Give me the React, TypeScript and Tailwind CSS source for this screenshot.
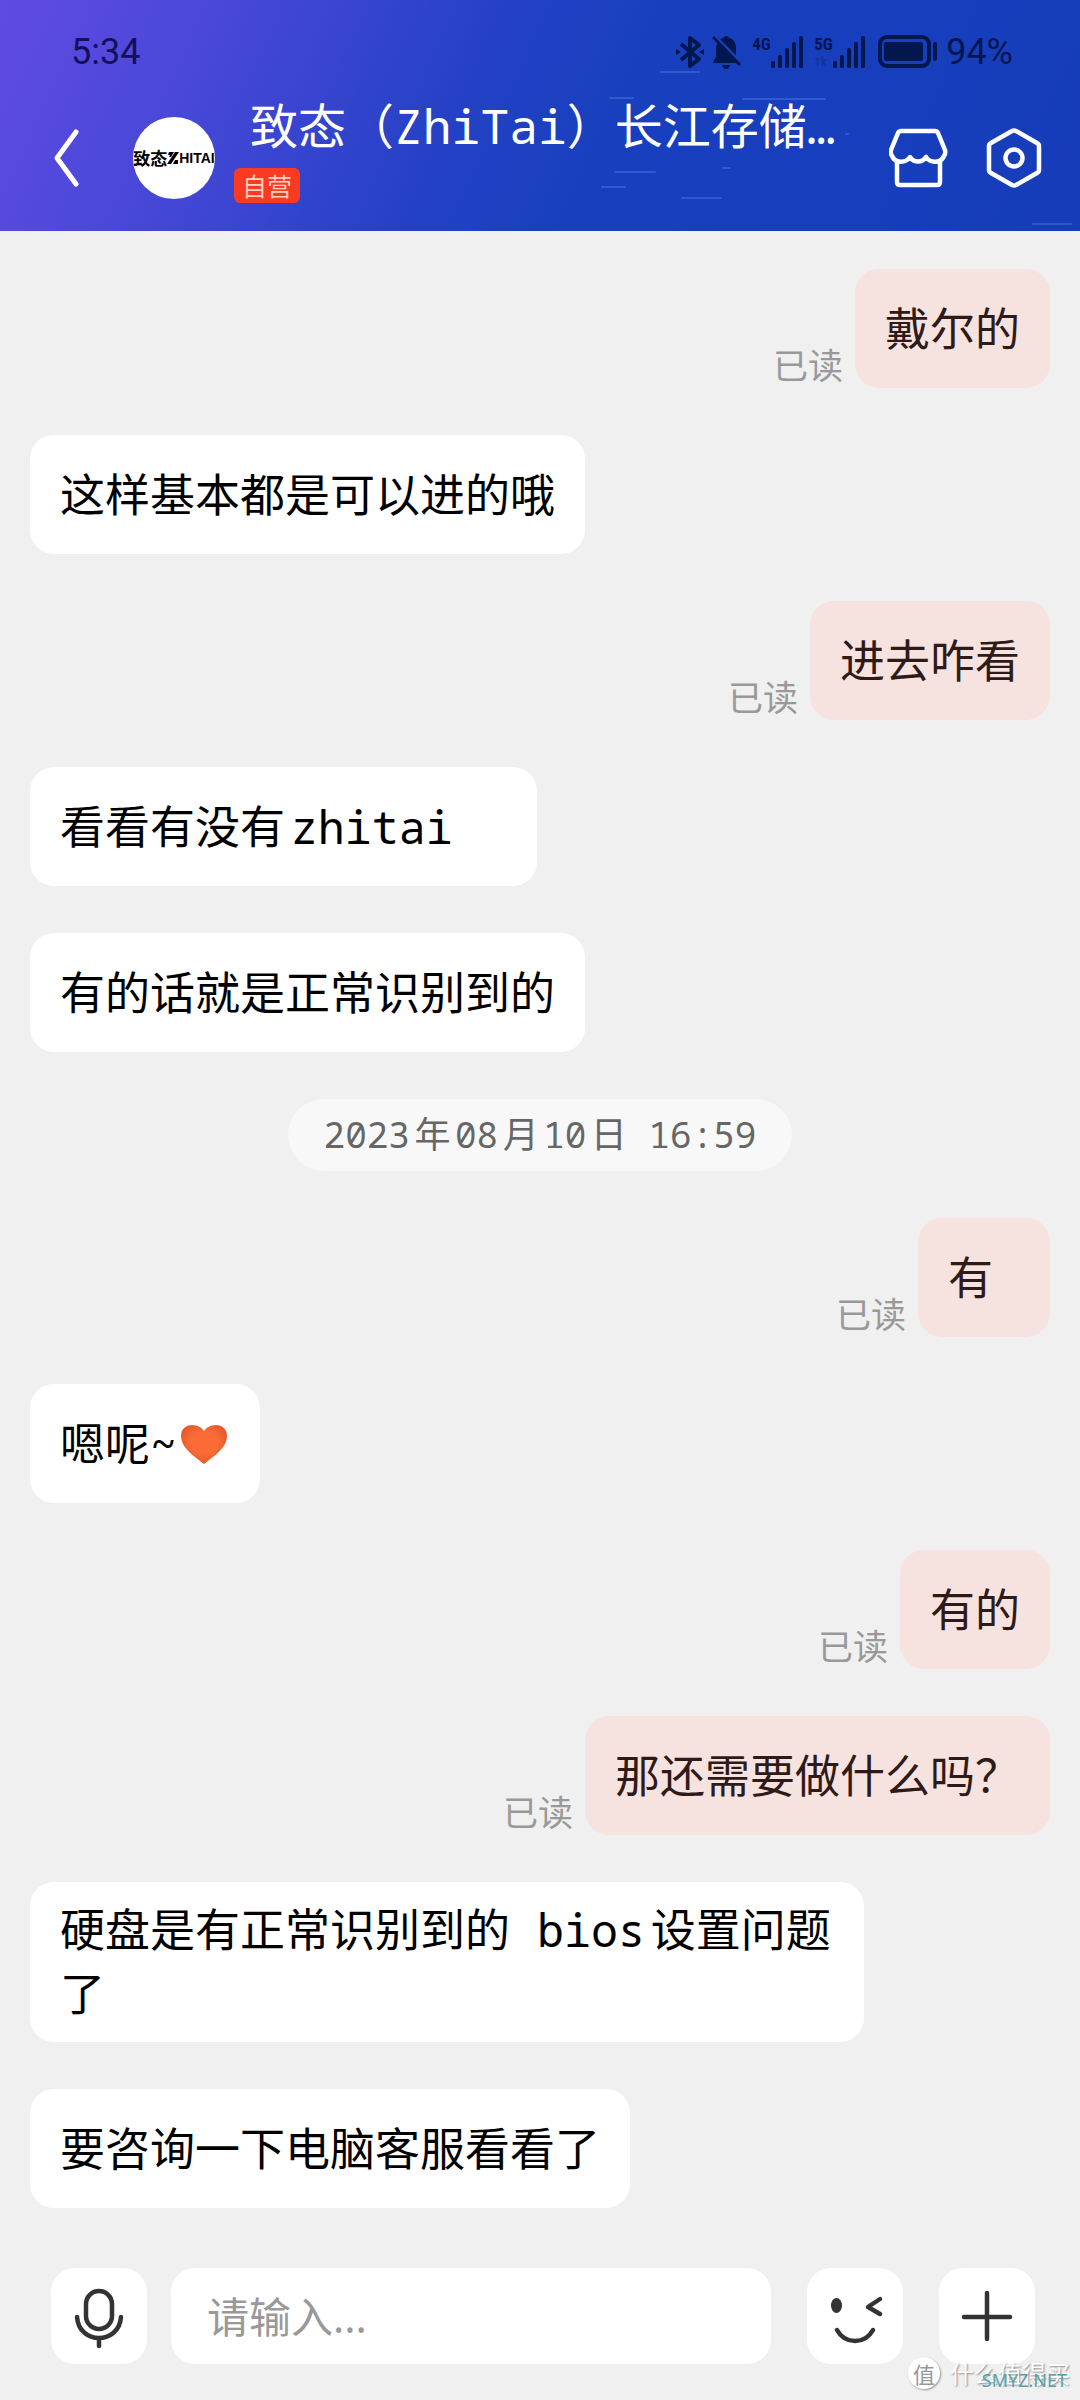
import type { ReactNode } from 'react'

type Message =
  | { kind: 'mine' | 'theirs'; text: string; heart?: boolean }
  | { kind: 'date'; text: string }

// Trailing no-break spaces are part of what was sent
const messages: Message[] = [
  { kind: 'mine', text: '戴尔的' },
  { kind: 'theirs', text: '这样基本都是可以进的哦' },
  { kind: 'mine', text: '进去咋看' },
  { kind: 'theirs', text: '看看有没有zhitai\u00a0\u00a0' },
  { kind: 'theirs', text: '有的话就是正常识别到的' },
  { kind: 'date', text: '2023年08月10日 16:59' },
  { kind: 'mine', text: '有\u00a0' },
  { kind: 'theirs', text: '嗯呢~', heart: true },
  { kind: 'mine', text: '有的' },
  { kind: 'mine', text: '那还需要做什么吗？' },
  { kind: 'theirs', text: '硬盘是有正常识别到的 bios设置问题了' },
  { kind: 'theirs', text: '要咨询一下电脑客服看看了' },
]

const streaks = [
  [660, 72, 40],
  [609, 98, 25],
  [742, 99, 84],
  [845, 134, 4],
  [722, 168, 9],
  [614, 172, 42],
  [601, 187, 25],
  [681, 198, 41],
  [1032, 224, 40],
]

function HeaderStreaks() {
  return (
    <svg
      className="absolute top-0 right-0 h-[231px] w-[1080px]"
      viewBox="0 0 1080 231"
      aria-hidden="true"
    >
      {streaks.map(([x, y, w]) => (
        <rect key={`${x}-${y}`} x={x} y={y - 1} width={w} height="2" rx="1" fill="#6f9bff" opacity="0.3" />
      ))}
    </svg>
  )
}

function BluetoothIcon() {
  return (
    <svg className="h-[34px] w-[28px]" viewBox="0 0 28 34" fill="none" stroke="currentColor" strokeWidth="4" strokeLinejoin="round">
      <path d="M5 9 L23 24 L14 31 V3 L23 10 L5 25" />
      <path d="M0 14 L5 17 L0 20 Z M28 14 L23 17 L28 20 Z" fill="currentColor" stroke="none" />
    </svg>
  )
}

function MutedBellIcon() {
  return (
    <svg className="h-[34px] w-[30px]" viewBox="0 0 30 34" fill="none">
      <path
        d="M7 6 C8 4 10 3 12 2.500 Q14 -1 16.500 2.500 C22 4 24 8 24 13 V20 L28 28 H1 Q1 26 4 22 V14 Q4 9 7 6 Z"
        fill="currentColor"
      />
      <path d="M10 30 H18 Q17 34 14 34 Q11 34 10 30 Z" fill="currentColor" />
      <path d="M1 0 L30 29" stroke="#1940bd" strokeWidth="4" />
      <path d="M1 2 L28 30" stroke="currentColor" strokeWidth="3" />
    </svg>
  )
}

function Signal({ label, speed }: { label: string; speed?: string }) {
  return (
    <div className="flex h-[34px]">
      <div className="flex w-[18px] flex-col justify-between font-['Roboto_Condensed','Liberation_Sans_Narrow','Roboto',sans-serif] text-[17px] leading-[18px] font-bold">
        <span>{label}</span>
        {speed && <span className="text-[13px] leading-[14px] opacity-25">{speed}</span>}
      </div>
      <svg className="h-[34px] w-[34px]" viewBox="0 0 34 34" fill="currentColor">
        <rect x="1" y="26" width="4" height="7" rx="1.500" />
        <rect x="8" y="20" width="4" height="13" rx="1.500" />
        <rect x="15" y="13" width="4" height="20" rx="1.500" />
        <rect x="22" y="7" width="4" height="26" rx="1.500" />
        <rect x="29" y="1" width="4" height="32" rx="1.500" />
      </svg>
    </div>
  )
}

function BatteryIcon() {
  return (
    <svg className="h-[34px] w-[60px]" viewBox="0 0 60 34" fill="none">
      <rect x="2" y="2" width="49" height="29" rx="7" stroke="currentColor" strokeWidth="4" />
      <rect x="6" y="7" width="39" height="19" rx="2" fill="currentColor" />
      <path d="M57 9 V24" stroke="currentColor" strokeWidth="4" strokeLinecap="round" />
    </svg>
  )
}

function StatusBar() {
  return (
    <div className="relative flex h-[34px] items-center justify-between pr-[67px] pl-[71px] font-['Roboto',sans-serif] text-[36px] leading-[34px] text-[#03174f]">
      <span className="text-[#130f5c]">5:34</span>
      <div className="flex items-center">
        <BluetoothIcon />
        <div className="ml-2 flex">
          <MutedBellIcon />
        </div>
        <div className="ml-2.5 flex gap-2.5">
          <Signal label="4G" />
          <Signal label="5G" speed="1k" />
        </div>
        <div className="mr-2 ml-3 flex">
          <BatteryIcon />
        </div>
        <span>94%</span>
      </div>
    </div>
  )
}

function Avatar() {
  return (
    <div className="flex size-[82px] shrink-0 items-center justify-center overflow-hidden rounded-full bg-white text-black">
      <span className="font-['Noto_Sans_CJK_SC',sans-serif] text-[17px] leading-[18px] font-bold whitespace-nowrap">致态</span>
      <svg className="h-[12px] w-[12px] shrink-0" viewBox="0 0 12 12" fill="currentColor" aria-label="Z">
        <path d="M2 0 H7 L4 5 H2 L3 3 H1 Z M8 0 H12 L4 12 H0 Z M8 8 H11 V12 H6 Z" />
      </svg>
      <span className="font-['Liberation_Sans',sans-serif] text-[14px] leading-[18px] font-bold">HITAI</span>
    </div>
  )
}

function Header() {
  return (
    <header className="relative bg-[linear-gradient(115deg,#604be2_0%,#4a48d8_18%,#2541c6_42%,#1840be_56%,#163cba_100%)] pt-[35px] pb-[27px]">
      <HeaderStreaks />
      <StatusBar />
      <div className="relative mt-[31px] flex h-[104px] items-center pr-[37px] pl-[49px] text-white">
        <button type="button" aria-label="返回" className="mt-3 shrink-0">
          <svg className="h-[60px] w-[34px]" viewBox="0 0 34 60" fill="none" stroke="currentColor" strokeWidth="5" strokeLinecap="round" strokeLinejoin="round">
            <path d="M27 4 L8 30 L27 56" />
          </svg>
        </button>
        <div className="mt-3 ml-[50px]">
          <Avatar />
        </div>
        <div className="ml-[19px] flex min-w-0 flex-1 flex-col items-start self-start">
          <h1 className="ml-4 text-[48px] leading-[52px] whitespace-nowrap">致态（ZhiTai）长江存储…</h1>
          <span className="mt-4 rounded-md bg-[#fb3a22] px-2 font-['Noto_Sans_CJK_SC',sans-serif] text-[25px] leading-[35px] text-[#ffd0c0]">
            自营
          </span>
        </div>
        <button type="button" aria-label="店铺" className="mt-3 shrink-0">
          <svg className="h-[62px] w-[60px]" viewBox="0 0 60 62" fill="none" stroke="currentColor" strokeWidth="4.500" strokeLinejoin="round">
            <path d="M12 4 H46 Q48 4 49 6 L56 23 Q57 26 55 29 C52 36 42 37 37 30 C33 36 25 36 21 30 C16 37 6 36 3 29 Q1 26 2 23 L9 6 Q10 4 12 4 Z" />
            <path d="M8 34 V55 Q8 58 11 58 H48 Q51 58 51 55 V34" />
          </svg>
        </button>
        <button type="button" aria-label="设置" className="mt-3 ml-[36px] shrink-0">
          <svg className="h-[62px] w-[58px]" viewBox="0 0 58 62" fill="none" stroke="currentColor" strokeWidth="4.500" strokeLinejoin="round">
            <path d="M27 4 Q29 3 31 4 L52 16 Q54 17 54 19 V43 Q54 45 52 46 L31 58 Q29 59 27 58 L6 46 Q4 45 4 43 V19 Q4 17 6 16 Z" />
            <circle cx="29" cy="31" r="8.500" />
          </svg>
        </button>
      </div>
    </header>
  )
}

function Heart() {
  return (
    <svg className="h-[42px] w-[53px]" viewBox="0 0 53 42" role="img" aria-label="爱心">
      <defs>
        <radialGradient id="heart" cx="0.5" cy="0.45" r="0.6">
          <stop offset="0.5" stopColor="#fa6b35" />
          <stop offset="1" stopColor="#e0542a" />
        </radialGradient>
      </defs>
      <path
        d="M27 41 C18 34 4 25 4 13 C4 6 9 2 15 2 C21 2 25 5 27 8 C29 5 33 2 39 2 C45 2 50 6 50 13 C50 25 36 34 27 41 Z"
        fill="url(#heart)"
      />
    </svg>
  )
}

function Bubble({ mine, children }: { mine?: boolean; children: ReactNode }) {
  const tone = mine ? 'bg-[#f6e2df] text-[#2e1a17]' : 'bg-white text-black'
  return (
    <div
      className={`${tone} flex min-h-[119px] max-w-[834px] items-center rounded-3xl px-[30px] py-4 text-[45px] leading-[64px]`}
    >
      {children}
    </div>
  )
}

function MessageRow({ message }: { message: Message }) {
  if (message.kind === 'date') {
    return (
      <li className="flex justify-center">
        <time className="rounded-[36px] bg-[#f8f8f8] px-[36px] text-[36px] leading-[72px] text-[#666]">
          {message.text}
        </time>
      </li>
    )
  }
  if (message.kind === 'mine') {
    return (
      <li className="flex items-end justify-end gap-3">
        <span className="text-[35px] leading-[44px] text-[#999]">已读</span>
        <Bubble mine>{message.text}</Bubble>
      </li>
    )
  }
  return (
    <li className="flex">
      <Bubble>
        <p>{message.text}</p>
        {message.heart && <Heart />}
      </Bubble>
    </li>
  )
}

function RoundButton({ label, children }: { label: string; children: ReactNode }) {
  return (
    <button type="button" aria-label={label} className="size-24 shrink-0 rounded-3xl bg-white text-[#333]">
      <svg className="size-24" viewBox="0 0 96 96" fill="none" stroke="currentColor" strokeWidth="4.500" strokeLinecap="round" strokeLinejoin="round">
        {children}
      </svg>
    </button>
  )
}

function Composer() {
  return (
    <footer className="mt-auto flex items-center pt-[60px] pr-[45px] pb-[36px] pl-[51px]">
      <RoundButton label="语音">
        <rect x="35" y="23" width="26" height="38" rx="13" />
        <path d="M26 49 C28 77 68 77 70 49 M48 71 V78" />
      </RoundButton>
      <input
        type="text"
        aria-label="消息"
        placeholder="请输入..."
        className="mr-9 ml-6 h-24 min-w-0 flex-1 rounded-3xl bg-white px-9 font-['Noto_Sans','Noto_Sans_CJK_SC',sans-serif] text-[42px] outline-none placeholder:text-[#999]"
      />
      <RoundButton label="表情">
        <ellipse cx="29.500" cy="37.500" rx="5.500" ry="7.500" fill="currentColor" stroke="none" />
        <path d="M73 31 L61 39 L73 46" />
        <path d="M30 62 Q36 73 48 73 Q60 73 66 62" />
      </RoundButton>
      <div className="ml-9 flex">
        <RoundButton label="更多">
          <path d="M25 49 H71 M48 25 V71" />
        </RoundButton>
      </div>
    </footer>
  )
}

function Watermark() {
  return (
    <div className="pointer-events-none absolute right-[10px] bottom-[10px] font-['Noto_Sans_CJK_SC',sans-serif]">
      <div className="flex items-center gap-2.5 text-[24px] leading-[34px] text-white [text-shadow:1px_1px_2px_#888]">
        <span className="flex size-[32px] items-center justify-center rounded-full bg-white text-[22px] text-[#999] shadow-[1px_1px_2px_#999] [text-shadow:none]">
          值
        </span>
        <span>什么值得买</span>
      </div>
      <span className="absolute right-[3px] bottom-0 font-['Noto_Sans',sans-serif] text-[18px] leading-[20px] text-[#5aa0aa]">
        SMYZ.NET
      </span>
    </div>
  )
}

export default function App() {
  return (
    <div className="relative flex min-h-screen flex-col bg-[#f0f0f0] font-['Noto_Sans_Mono','DejaVu_Sans_Mono','Noto_Sans_CJK_SC',monospace] [text-autospace:normal]">
      <Header />
      <main className="px-[30px] pt-[38px]">
        <ul className="flex flex-col gap-[47px]">
          {messages.map((message, i) => (
            <MessageRow key={i} message={message} />
          ))}
        </ul>
      </main>
      <Composer />
      <Watermark />
    </div>
  )
}
